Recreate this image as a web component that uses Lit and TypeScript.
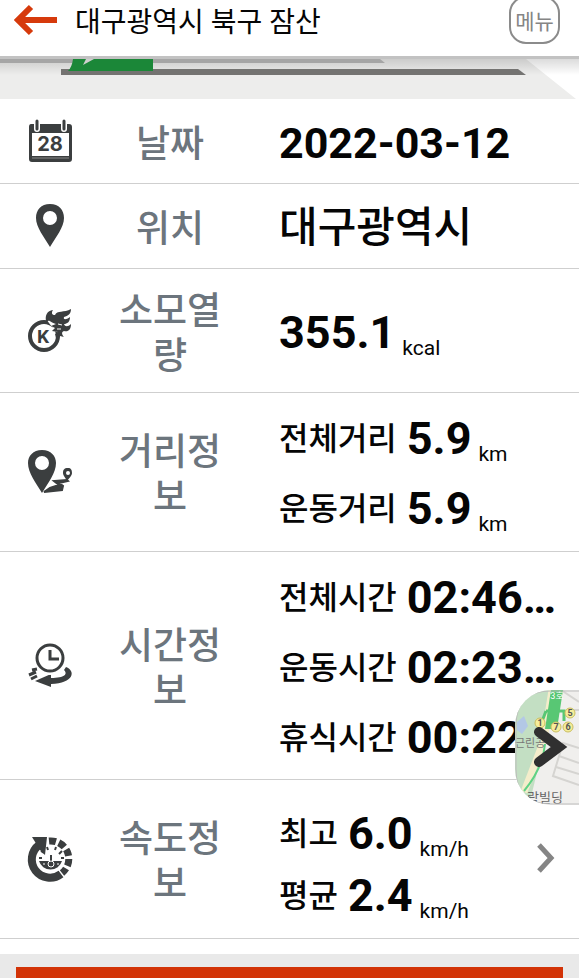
import { LitElement, html, svg, css, nothing } from "lit";
import { customElement, property } from "lit/decorators.js";

type Value = { label?: string; value: string; unit?: string };
type Row = { icon: string; label: string; kind: string; values: Value[]; link?: boolean };

const rows: Row[] = [
  { icon: "calendar", label: "날짜", kind: "date", values: [{ value: "2022-03-12" }] },
  { icon: "pin", label: "위치", kind: "place", values: [{ value: "대구광역시" }] },
  { icon: "burn", label: "소모열량", kind: "energy", values: [{ value: "355.1", unit: "kcal" }] },
  {
    icon: "route", label: "거리정보", kind: "distance",
    values: [
      { label: "전체거리", value: "5.9", unit: "km" },
      { label: "운동거리", value: "5.9", unit: "km" },
    ],
  },
  {
    icon: "clock", label: "시간정보", kind: "time",
    values: [
      { label: "전체시간", value: "02:46…" },
      { label: "운동시간", value: "02:23…" },
      { label: "휴식시간", value: "00:22…" },
    ],
  },
  {
    icon: "speed", label: "속도정보", kind: "speed", link: true,
    values: [
      { label: "최고", value: "6.0", unit: "km/h" },
      { label: "평균", value: "2.4", unit: "km/h" },
    ],
  },
];

const icons: Record<string, unknown> = {
  calendar: svg`
    <path d="M3 5H41Q44 5 44 8V40Q44 43 41 43H4Q1 43 1 40V8Q1 5 3 5ZM4 14V37H41V14Z" fill-rule="evenodd"/>
    <path d="M4 39H41" stroke="#888" stroke-width="1"/>
    <path d="M9 3V10M36 3V10" stroke="#fff" stroke-width="6" stroke-linecap="round"/>
    <path d="M9 2V10M36 2V10" stroke="#3b3e3f" stroke-width="3" stroke-linecap="round"/>
    <text x="22" y="32" text-anchor="middle" font-family="Inter, sans-serif" font-weight="700" font-size="20">28</text>`,
  pin: svg`<path d="M22 0C13 0 8 6 8 14C8 23 16 33 22 43C28 33 36 23 36 14C36 6 31 0 22 0ZM22 7A7 7 0 1 1 22 21A7 7 0 1 1 22 7Z" fill-rule="evenodd"/>`,
  burn: svg`
    <circle cx="16" cy="27" r="14" fill="none" stroke="#3b3e3f" stroke-width="4"/>
    <path d="M18 10L26 13L30 17L32 24L26 22L24 18Z" fill="#fff"/>
    <path d="M18 12C17 6 19 2 25 1C23 4 24 6 27 6C29 1 36 4 43 0C43 5 40 7 36 8C35 11 38 11 42 8C42 13 39 15 36 15C37 18 40 18 43 15C43 21 40 23 36 22C33 23 34 26 36 28L32 27L29 33L27 25L30 23L24 22L27 19L23 17L28 15C23 14 22 11 20 12L18 14Z"/>
    <path d="M30 15L34 16M29 20L33 20" stroke="#fff" stroke-width="1"/>
    <text x="15" y="34" text-anchor="middle" font-family="Roboto, sans-serif" font-weight="700" font-size="19">K</text>`,
  route: svg`
    <path d="M14 0C5 0 0 6 0 13C0 23 8 33 14 43C20 33 28 23 28 13C28 6 23 0 14 0ZM14 6A7 7 0 1 1 14 20A7 7 0 1 1 14 6Z" fill-rule="evenodd"/>
    <path d="M40 18C36 18 35 20 35 23C35 26 38 28 39 31C41 28 44 26 44 23C44 20 43 18 40 18ZM40 21A2 2 0 1 1 40 25A2 2 0 1 1 40 21Z" fill-rule="evenodd"/>
    <path d="M39 30L26 31L31 35L22 38L16 42L34 40L35 36L31 33L40 31Z" stroke="#3b3e3f" stroke-width="2"/>`,
  clock: svg`
    <path d="M38 23C48 27 46 39 23 40V43L7 37L23 30V34C37 34 40 30 36 26Z"/>
    <circle cx="22" cy="14" r="14" fill="#fff" stroke="#fff" stroke-width="6"/>
    <circle cx="22" cy="14" r="13" fill="#fff" stroke="#3b3e3f" stroke-width="3"/>
    <path d="M22 6V15H31" fill="none" stroke="#3b3e3f" stroke-width="3"/>
    <path d="M1 31L8 28M3 35L9 32M4 26L9 25" stroke="#3b3e3f" stroke-width="3"/>`,
  speed: svg`
    <path d="M11 8A17 17 0 1 0 33 37" fill="none" stroke="#3b3e3f" stroke-width="8"/>
    <path d="M4 0H19L17 18L12 13L9 8Z"/>
    <path d="M21 4A18 18 0 0 1 34 36" fill="none" stroke="#3b3e3f" stroke-width="7" stroke-dasharray="7 3"/>
    <path d="M11 24H34A12 12 0 0 1 11 24Z"/>
    <path d="M11 21L14 21M13 14L16 16M19 10L20 13M28 10L27 13M34 14L31 17M36 21H33M23 18V27" stroke="#3b3e3f" stroke-width="2"/>
    <circle cx="23" cy="27" r="3" fill="#3b3e3f" stroke="#fff" stroke-width="1"/>
    <path d="M15 27H17M29 27H31" stroke="#fff" stroke-width="1"/>`,
};

@customElement("info-row")
class InfoRow extends LitElement {
  @property({ attribute: false }) row!: Row;

  static styles = css`
    :host { display: block; flex: none; border-bottom: 1px solid #cfcfcf; }
    .row {
      display: grid;
      grid-template-columns: 100px 140px minmax(0, 1fr);
      align-items: center;
      min-height: 84px;
      position: relative;
    }
    .icon { display: block; width: 44px; height: 44px; margin-left: 28px; fill: #3b3e3f; overflow: visible; }
    .label {
      margin: 0;
      padding: 6px 16px 0;
      text-align: center;
      font-size: 37px;
      font-weight: 500;
      line-height: 45px;
      color: #6c757d;
      word-break: break-all;
    }
    .values { margin: 0; padding: 4px 0 0 39px; display: flex; flex-direction: column; }
    .line { display: flex; align-items: center; height: 70px; line-height: 70px; white-space: nowrap; }
    .sub { padding-right: 10px; font-size: 32px; font-weight: 500; }
    .value { font-size: 45px; font-weight: 700; }
    .unit { padding: 30px 0 0 7px; font-size: 21px; line-height: 24px; }
    .date .value { font-size: 43px; }
    .place .value { font-size: 42px; font-weight: 500; }
    .energy { min-height: 123px; }
    .distance, .speed { min-height: 158px; }
    .time { min-height: 227px; }
    .date .line, .place .line, .speed .line { height: 62px; line-height: 62px; }
    .speed .values { padding-top: 12px; }
    .more {
      position: absolute;
      right: 24px;
      top: 50%;
      transform: translateY(-50%);
      display: block;
      width: 20px;
      height: 32px;
    }
    .more svg { display: block; }
  `;

  render() {
    const r = this.row;
    return html`
      <div class="row ${r.kind}">
        <svg class="icon" viewBox="0 0 44 44" aria-hidden="true">${icons[r.icon]}</svg>
        <h2 class="label">${r.label}</h2>
        <div class="values">
          ${r.values.map(
            (v) => html`<div class="line">
              ${v.label ? html`<span class="sub">${v.label}</span>` : nothing}
              <span class="value">${v.value}</span>
              ${v.unit ? html`<span class="unit">${v.unit}</span>` : nothing}
            </div>`
          )}
        </div>
        ${r.link
          ? html`<a class="more" href="#speed" aria-label="속도정보">
              <svg width="20" height="32" viewBox="0 0 20 32" aria-hidden="true">
                <path d="M4 2L16 15L4 28" fill="none" stroke="#858585" stroke-width="5"/>
              </svg>
            </a>`
          : nothing}
      </div>
    `;
  }
}

@customElement("app-root")
class AppRoot extends LitElement {
  static styles = css`
    :host {
      display: flex;
      flex-direction: column;
      position: relative;
      height: 100vh;
      overflow: hidden;
      background: #fff;
      color: #050505;
      font-family: Roboto, "Noto Sans CJK KR", sans-serif;
    }
    .header {
      flex: none;
      display: flex;
      align-items: center;
      height: 40px;
      padding: 0 19px 16px 14px;
      border-bottom: 3px solid #c2c2c2;
    }
    button { padding: 0; border: 0; background: none; font: inherit; }
    .back { width: 44px; height: 32px; }
    .back svg { display: block; }
    .title { flex: 1; margin: 0; padding: 6px 0 0 17px; font-size: 28px; font-weight: 400; line-height: 40px; }
    .menu {
      box-sizing: border-box;
      width: 51px;
      height: 48px;
      border: 2px solid #8b8b8b;
      border-radius: 17px;
      color: #858585;
      font-size: 21px;
    }
    .banner { flex: none; display: block; width: 100%; }
    .list { display: flex; flex-direction: column; }
    .footer { flex: 1; margin-top: 15px; padding: 13px 16px 0; background: #e9e9e9; }
    .action { display: block; width: 100%; height: 56px; background: #d23307; }
    .map {
      position: absolute;
      right: 0;
      top: 690px;
      width: 64px;
      height: 115px;
      border-radius: 36px 0 0 36px;
      overflow: hidden;
    }
    .map svg { display: block; }
  `;

  render() {
    return html`
      <header class="header">
        <button class="back" aria-label="뒤로">
          <svg width="44" height="32" viewBox="0 0 44 32" aria-hidden="true">
            <path d="M43 16H5M17 3L4 16L17 29" fill="none" stroke="#d63a0c" stroke-width="6"/>
          </svg>
        </button>
        <h1 class="title">대구광역시 북구 잠산</h1>
        <button class="menu">메뉴</button>
      </header>
      <svg class="banner" viewBox="0 0 579 40" aria-hidden="true">
        <defs>
          <linearGradient id="shade" x2="0" y2="1">
            <stop offset="0" stop-color="#000" stop-opacity=".14"/>
            <stop offset="1" stop-color="#000" stop-opacity="0"/>
          </linearGradient>
        </defs>
        <path d="M0 0H526L576 40H0Z" fill="#ededec"/>
        <rect width="579" height="16" fill="url(#shade)"/>
        <path d="M0 0H380L385 4H0Z" fill="#a5a5a5"/>
        <path d="M61 10H518L526 16H61Z" fill="#747371"/>
        <path d="M73 0H153V12H68Q72 8 73 0Z" fill="#1b8738"/>
        <path d="M86 0H94L83 6Z" fill="#cfcfce"/>
      </svg>
      <main class="list">${rows.map((row) => html`<info-row .row=${row}></info-row>`)}</main>
      <footer class="footer"><button class="action" aria-label="확인"></button></footer>
      <button class="map" aria-label="지도">
        <svg width="64" height="115" viewBox="0 0 64 115" aria-hidden="true">
          <rect width="64" height="115" fill="#f0efed"/>
          <path d="M0 0H38L30 50L14 115H0Z" fill="#c3dfc3"/>
          <path d="M2 32L9 26L13 36L7 44L2 40Z" fill="#b3c8e6"/>
          <path d="M37 0L29 50L9 102" fill="none" stroke="#f4edcb" stroke-width="7"/>
          <path d="M30 54Q28 78 9 101" fill="none" stroke="#5fd284" stroke-width="2"/>
          <path d="M64 58L48 53L38 86L64 95M46 0L64 12M64 20H56M44 66L64 73M41 77L64 84" fill="none" stroke="#d5d4d1" stroke-width="2"/>
          <path d="M36 0H48L42 39H30Z" fill="#58c774"/>
          <path d="M31 21H49V31M31 21L26 34" fill="none" stroke="#58c774" stroke-width="3"/>
          <text x="42" y="9" text-anchor="middle" font-size="9" fill="#fff">3호</text>
          <text x="0" y="57" font-size="11" fill="#777">근린공</text>
          <text x="12" y="112" font-size="13" fill="#666">락빌딩</text>
          <g fill="#f5ed9a" stroke="#c9bd60">
            <circle cx="55" cy="23" r="5"/><circle cx="25" cy="33" r="5"/>
            <circle cx="41" cy="37" r="5"/><circle cx="53" cy="37" r="5"/>
          </g>
          <g font-size="9" font-weight="700" text-anchor="middle" fill="#555">
            <text x="55" y="26">5</text><text x="25" y="36">1</text>
            <text x="41" y="40">7</text><text x="53" y="40">6</text>
          </g>
          <path d="M24 42L44 57L24 72" fill="none" stroke="#303030" stroke-width="10" stroke-linecap="round"/>
          <path d="M64 1H36Q1 1 1 36V79Q1 114 36 114H64" fill="none" stroke="#bdbdbd" stroke-width="1"/>
        </svg>
      </button>
    `;
  }
}
